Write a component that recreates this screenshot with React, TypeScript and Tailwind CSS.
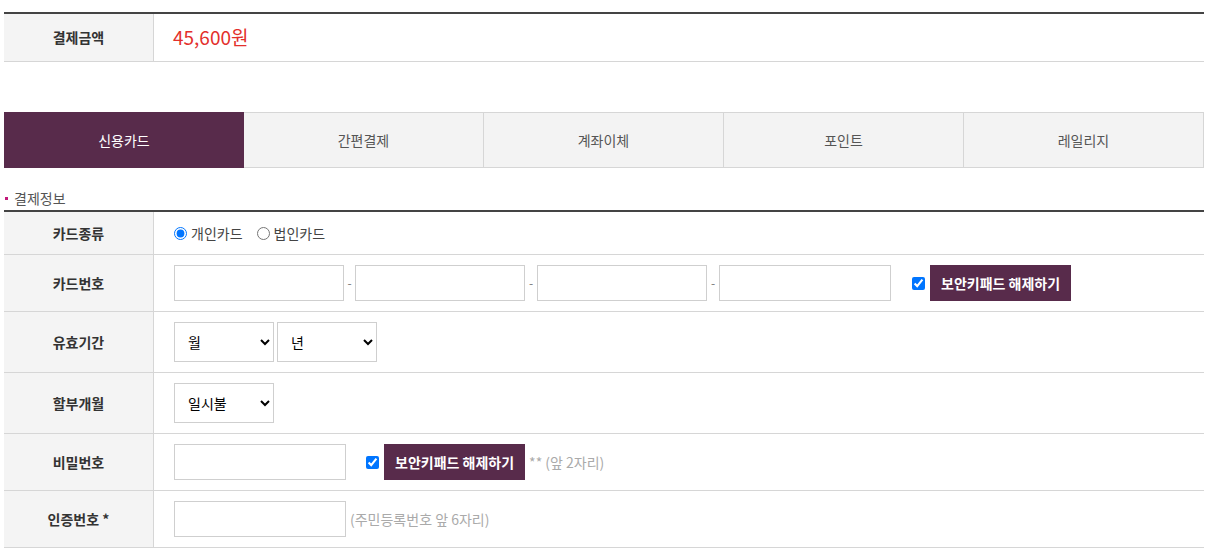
import React from 'react';

const font = { fontFamily: '"Noto Sans CJK KR", "Noto Sans", sans-serif' };

const tabs = ['신용카드', '간편결제', '계좌이체', '포인트', '레일리지'];

const Row = ({ label, className, children }: { label: React.ReactNode; className: string; children: React.ReactNode }) => (
  <div className={`grid grid-cols-[150px_1fr] border-b border-[#d6d6d6] ${className}`}>
    <div className="flex items-center justify-center bg-[#f4f4f4] border-r border-[#d6d6d6] text-[14px] font-bold text-[#333]">
      {label}
    </div>
    <div className="flex items-center pl-[20px]">{children}</div>
  </div>
);

const TextBox = ({ w }: { w: string }) => (
  <input type="text" className={`${w} h-[36px] border border-[#cfcfcf] bg-white outline-none`} />
);

const KeypadButton = () => (
  <label className="flex items-center">
    <input type="checkbox" defaultChecked className="w-[13px] h-[13px] m-0" />
    <span className="ml-[5px] h-[36px] px-[11px] flex items-center bg-[#582b4b] text-white text-[14px] font-bold">
      보안키패드 해제하기
    </span>
  </label>
);

const Select = ({ options, w }: { options: string[]; w: string }) => (
  <select className={`${w} h-[40px] border border-[#cfcfcf] bg-white pl-[9px] pr-[6px] text-[14px] text-black`}>
    {options.map((o) => (
      <option key={o}>{o}</option>
    ))}
  </select>
);

export default function App() {
  return (
    <div className="bg-white min-h-[552px] pt-[12px] text-[#333]" style={font}>
      <div className="ml-[4px] w-[1200px]">
        {/* 결제금액 */}
        <div className="border-t-2 border-[#444]">
          <div className="grid grid-cols-[150px_1fr] h-[48px] border-b border-[#d6d6d6]">
            <div className="flex items-center justify-center bg-[#f4f4f4] border-r border-[#d6d6d6] text-[14px] font-bold">
              결제금액
            </div>
            <div className="flex items-center pl-[19px] text-[19px] text-[#e3302c]">45,600원</div>
          </div>
        </div>

        {/* 결제수단 탭 */}
        <div className="mt-[50px] grid grid-cols-5 h-[56px]">
          {tabs.map((t, i) => (
            <div
              key={t}
              className={
                i === 0
                  ? 'flex items-center justify-center bg-[#582b4b] text-white text-[14px]'
                  : 'flex items-center justify-center bg-[#f3f3f3] border border-l-0 border-[#d6d6d6] text-[14px] text-[#555]'
              }
            >
              {t}
            </div>
          ))}
        </div>

        {/* 결제정보 */}
        <div className="mt-[20px] flex items-center h-[20px] text-[14px] text-[#555]">
          <span className="w-[3px] h-[3px] bg-[#c2187a] ml-[1px] mr-[6px]" />
          결제정보
        </div>
        <div className="mt-[2px] border-t-2 border-[#444]">
          <Row label="카드종류" className="h-[43px]">
            <label className="flex items-center text-[14px] text-[#444]">
              <input type="radio" name="ctype" defaultChecked className="w-[13px] h-[13px] m-0" />
              <span className="ml-[4px]">개인카드</span>
            </label>
            <label className="flex items-center text-[14px] text-[#444] ml-[14px]">
              <input type="radio" name="ctype" className="w-[13px] h-[13px] m-0" />
              <span className="ml-[4px]">법인카드</span>
            </label>
          </Row>
          <Row label="카드번호" className="h-[57px]">
            <TextBox w="w-[170px]" />
            <span className="w-[11px] text-center text-[#777] text-[12px]">-</span>
            <TextBox w="w-[170px]" />
            <span className="w-[12px] text-center text-[#777] text-[12px]">-</span>
            <TextBox w="w-[170px]" />
            <span className="w-[12px] text-center text-[#777] text-[12px]">-</span>
            <TextBox w="w-[172px]" />
            <div className="ml-[21px]">
              <KeypadButton />
            </div>
          </Row>
          <Row label="유효기간" className="h-[61px]">
            <Select options={['월']} w="w-[100px]" />
            <div className="ml-[3px]">
              <Select options={['년']} w="w-[100px]" />
            </div>
          </Row>
          <Row label="할부개월" className="h-[61px]">
            <Select options={['일시불']} w="w-[100px]" />
          </Row>
          <Row label="비밀번호" className="h-[57px]">
            <TextBox w="w-[172px]" />
            <div className="ml-[20px]">
              <KeypadButton />
            </div>
            <span className="ml-[4px] text-[14px] text-[#aaa]">** (앞 2자리)</span>
          </Row>
          <Row label="인증번호 *" className="h-[57px]">
            <TextBox w="w-[172px]" />
            <span className="ml-[4px] text-[14px] text-[#aaa]">(주민등록번호 앞 6자리)</span>
          </Row>
        </div>
      </div>
    </div>
  );
}
